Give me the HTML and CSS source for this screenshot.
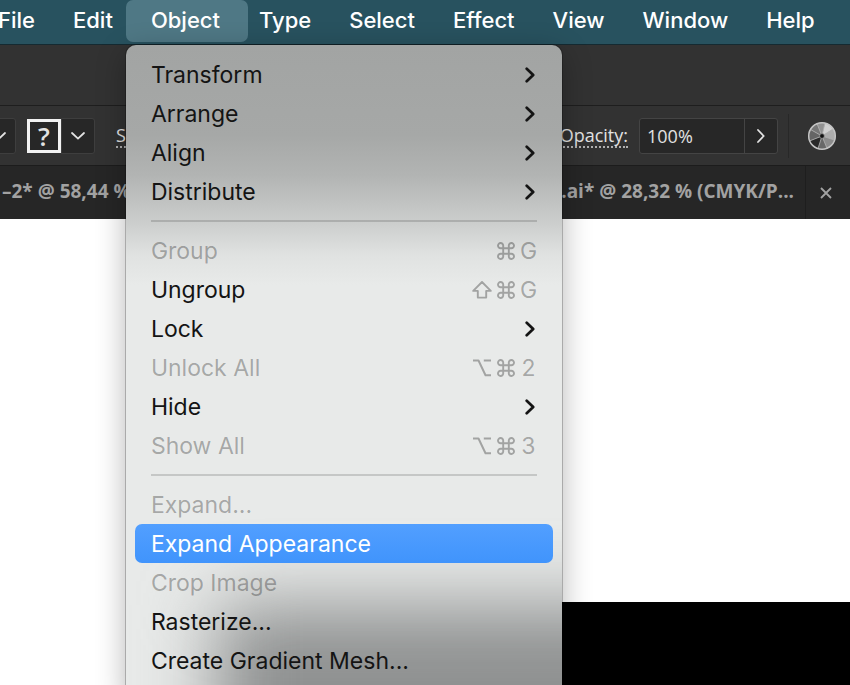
FILE: index.html
```html
<!DOCTYPE html>
<html lang="en">
<head>
    <meta charset="UTF-8">
    <meta name="viewport" content="width=device-width, initial-scale=1.0">
    <title>Object menu</title>
    <link rel="stylesheet" href="styles.css">
</head>
<body>
    <svg class="sprite" aria-hidden="true">
        <symbol id="chevron" viewBox="0 0 10 16">
            <path d="M1.7 1.7 8.2 8 1.7 14.3" fill="none" stroke="currentColor" stroke-width="2.7" stroke-linecap="round" stroke-linejoin="round"/>
        </symbol>
        <symbol id="command" viewBox="0 0 18 18">
            <path d="M6.2 6.2H3.7A2.6 2.6 0 1 1 6.2 3.6V14.4A2.6 2.6 0 1 1 3.7 11.8H14.3A2.6 2.6 0 1 1 11.8 14.4V3.6A2.6 2.6 0 1 1 14.3 6.2Z" fill="none" stroke="currentColor" stroke-width="1.9"/>
        </symbol>
        <symbol id="option" viewBox="0 0 19 18">
            <path d="M.5 1.5H6L13 16.2H18.5M11.3 1.5H18.5" fill="none" stroke="currentColor" stroke-width="2" stroke-linejoin="round"/>
        </symbol>
        <symbol id="shift" viewBox="0 0 20 18">
            <path d="M10 1 18.8 9.9H14.2V16.6H5.8V9.9H1.2Z" fill="none" stroke="currentColor" stroke-width="1.9" stroke-linejoin="round"/>
        </symbol>
        <symbol id="caret" viewBox="0 0 14 8">
            <path d="M1 1 7 6.6 13 1" fill="none" stroke="currentColor" stroke-width="1.8" stroke-linecap="round"/>
        </symbol>
    </svg>

    <div class="app">
        <nav class="menubar">
            <button class="menubar-item">File</button>
            <button class="menubar-item">Edit</button>
            <div class="menubar-open">
                <button class="menubar-item active" aria-expanded="true">Object</button>
                <div class="menu" role="menu">
                    <button class="menu-item" role="menuitem">Transform<svg class="arrow"><use href="#chevron"/></svg></button>
                    <button class="menu-item" role="menuitem">Arrange<svg class="arrow"><use href="#chevron"/></svg></button>
                    <button class="menu-item" role="menuitem">Align<svg class="arrow"><use href="#chevron"/></svg></button>
                    <button class="menu-item" role="menuitem">Distribute<svg class="arrow"><use href="#chevron"/></svg></button>
                    <hr class="menu-line">
                    <button class="menu-item" role="menuitem" disabled>Group
                        <span class="keys"><svg class="key-cmd"><use href="#command"/></svg><span class="key">G</span></span>
                    </button>
                    <button class="menu-item" role="menuitem">Ungroup
                        <span class="keys"><svg class="key-mod"><use href="#shift"/></svg><svg class="key-cmd"><use href="#command"/></svg><span class="key">G</span></span>
                    </button>
                    <button class="menu-item" role="menuitem">Lock<svg class="arrow"><use href="#chevron"/></svg></button>
                    <button class="menu-item" role="menuitem" disabled>Unlock All
                        <span class="keys"><svg class="key-mod"><use href="#option"/></svg><svg class="key-cmd"><use href="#command"/></svg><span class="key">2</span></span>
                    </button>
                    <button class="menu-item" role="menuitem">Hide<svg class="arrow"><use href="#chevron"/></svg></button>
                    <button class="menu-item" role="menuitem" disabled>Show All
                        <span class="keys"><svg class="key-mod"><use href="#option"/></svg><svg class="key-cmd"><use href="#command"/></svg><span class="key">3</span></span>
                    </button>
                    <hr class="menu-line">
                    <button class="menu-item" role="menuitem" disabled>Expand...</button>
                    <button class="menu-item selected" role="menuitem">Expand Appearance</button>
                    <button class="menu-item" role="menuitem" disabled>Crop Image</button>
                    <button class="menu-item" role="menuitem">Rasterize...</button>
                    <button class="menu-item" role="menuitem">Create Gradient Mesh...</button>
                </div>
            </div>
            <button class="menubar-item">Type</button>
            <button class="menubar-item">Select</button>
            <button class="menubar-item">Effect</button>
            <button class="menubar-item">View</button>
            <button class="menubar-item">Window</button>
            <button class="menubar-item">Help</button>
        </nav>

        <div class="titlebar"></div>

        <div class="controls">
            <button class="drop drop-fill" aria-label="Fill"><svg class="caret"><use href="#caret"/></svg></button>
            <div class="swatch-group">
                <button class="swatch">?</button>
                <button class="drop" aria-label="Stroke color"><svg class="caret"><use href="#caret"/></svg></button>
            </div>
            <a class="control-label" href="#">S</a>
            <div class="opacity">
                <label class="control-label" for="opacity">Opacity:</label>
                <div class="field">
                    <input class="field-input" id="opacity" type="text" value="100%">
                    <button class="field-button" aria-label="Opacity options">
                        <svg width="8" height="14" viewBox="0 0 8 14"><path d="M1 1 6.6 7 1 13" fill="none" stroke="currentColor" stroke-width="1.8" stroke-linecap="round"/></svg>
                    </button>
                </div>
            </div>
            <button class="recolor" aria-label="Recolor artwork">
                <svg width="30" height="30" viewBox="-15 -15 30 30">
                    <circle r="13.5" fill="#858585"/>
                    <path d="M0 0 3-13A13.3 13.3 0 0 1 11-7Z" fill="#d0d0d0"/>
                    <path d="M0 0 11-7A13.3 13.3 0 0 1 12.5 4Z" fill="#adadad"/>
                    <path d="M0 0 12.5 4A13.3 13.3 0 0 1 5 12.3Z" fill="#8c8c8c"/>
                    <path d="M0 0 5 12.3A13.3 13.3 0 0 1-4 12.6Z" fill="#686868"/>
                    <path d="M0 0-4 12.6A13.3 13.3 0 0 1-12.5 5Z" fill="#292929"/>
                    <path d="M0 0-12.5 5A13.3 13.3 0 0 1-11.5-6.5Z" fill="#656565"/>
                    <path d="M0 0-11.5-6.5A13.3 13.3 0 0 1-5-12.3Z" fill="#777"/>
                    <path d="M0 0-5-12.3A13.3 13.3 0 0 1 3-13Z" fill="#929292"/>
                    <path d="M0 0 3-13M0 0 11-7M0 0 12.5 4M0 0 5 12.3M0 0-4 12.6M0 0-12.5 5M0 0-11.5-6.5M0 0-5-12.3" stroke="#b5b5b5" stroke-width=".8"/>
                    <circle r="13.3" fill="none" stroke="#c4c4c4" stroke-width="1.5"/>
                    <circle r="2.4" fill="#111" stroke="#999" stroke-width=".8"/>
                </svg>
            </button>
        </div>

        <div class="tabs">
            <span class="tab">–2* @ 58,44 %</span>
            <span class="tab tab-last">e.ai* @ 28,32 % (CMYK/P...</span>
            <button class="tab-close" aria-label="Close">
                <svg width="12" height="12" viewBox="0 0 12 12"><path d="M1 1 11 11M11 1 1 11" stroke="currentColor" stroke-width="1.8"/></svg>
            </button>
        </div>

        <main class="canvas">
            <div class="artwork"></div>
        </main>
    </div>
</body>
</html>
```
FILE: styles.css
```css
* {
    box-sizing: border-box;
}
body {
    margin: 0;
    background-color: #fff;
    font-family: Inter, sans-serif;
}
button {
    margin: 0;
    padding: 0;
    border: none;
    background: none;
    color: inherit;
    font: inherit;
}
.sprite {
    display: none;
}
.app {
    display: flex;
    flex-direction: column;
    height: 100vh;
    overflow: hidden;
}

/* menu bar */
.menubar {
    display: flex;
    gap: 38px;
    flex-shrink: 0;
    height: 45px;
    margin-left: -2px;
    background-color: #28525f;
    border-bottom: 1px solid #152a31;
    color: #fff;
    font-size: 22px;
    font-weight: 500;
}
.menubar-item {
    height: 42px;
    padding-bottom: 2px;
}
.menubar-open {
    position: relative;
    margin: 0 -27px 0 -25px;
}
.menubar-item.active {
    padding: 0 28px 2px 25px;
    background-color: #4f7885;
    border-radius: 7px;
}

/* drop-down menu */
.menu {
    position: absolute;
    top: 45px;
    left: 0;
    z-index: 10;
    width: 436px;
    padding: 10px 9px 20px;
    overflow: hidden;
    background: linear-gradient(#a2a4a3, #a6a8a7 90px, #b2b4b3 130px, #cdcfce 180px, #e0e2e1 210px, #e8eae9 240px);
    border-radius: 10px;
    box-shadow: 0 0 0 1px rgba(0, 0, 0, 0.22), 0 8px 30px rgba(0, 0, 0, 0.3);
    color: #141414;
    font-size: 23px;
    font-weight: 400;
}
/* dark artwork showing through the bottom of the menu */
.menu::before {
    content: "";
    position: absolute;
    top: 560px;
    right: -120px;
    bottom: -120px;
    left: 90px;
    z-index: -1;
    background-color: #8f9191;
    filter: blur(36px);
}
.menu-item {
    display: flex;
    align-items: center;
    justify-content: space-between;
    width: 100%;
    height: 39px;
    padding: 0 16px;
    border-radius: 7px;
    text-align: left;
}
.menu-item:disabled {
    color: rgba(0, 0, 0, 0.3);
}
.menu-item.selected {
    background: linear-gradient(#529fff, #4094fc);
    color: #fff;
}
.menu-line {
    height: 2px;
    margin: 9px 16px;
    border: none;
    background-color: rgba(0, 0, 0, 0.15);
}
.arrow {
    width: 10px;
    height: 16px;
    margin-right: 2px;
}
.keys {
    display: flex;
    align-items: center;
    gap: 5px;
    color: rgba(0, 0, 0, 0.3);
}
.key {
    width: 17px;
    text-align: center;
}
.key-cmd {
    width: 18px;
    height: 18px;
}
.key-mod {
    width: 20px;
    height: 18px;
}

/* application bars */
.titlebar {
    flex-shrink: 0;
    height: 61px;
    background-color: #323232;
    border-bottom: 1px solid #1e1e1e;
}
.controls {
    display: flex;
    align-items: center;
    flex-shrink: 0;
    height: 60px;
    padding-right: 13px;
    background-color: #323232;
    border-bottom: 1px solid #1c1c1c;
    color: #e2e2e2;
    font-family: "Open Sans", sans-serif;
    font-size: 18px;
}
.drop {
    display: flex;
    align-items: center;
    justify-content: center;
    width: 34px;
    height: 36px;
    background-color: #272727;
    border: 1px solid #3e3e3e;
    border-radius: 0 3px 3px 0;
}
.drop-fill {
    margin-left: -18px;
}
.caret {
    width: 14px;
    height: 8px;
}
.swatch-group {
    display: flex;
    align-items: center;
    margin: 0 21px 0 11px;
}
.swatch {
    width: 34px;
    height: 34px;
    background-color: #272727;
    border: 3px solid #f2f2f2;
    font-size: 26px;
    font-weight: 600;
    line-height: 28px;
}
.control-label {
    border-bottom: 2px dotted #b0b0b0;
    color: inherit;
    line-height: 22px;
    text-decoration: none;
}
.opacity {
    display: flex;
    align-items: center;
    gap: 11px;
    margin-left: auto;
}
.field {
    display: flex;
    width: 139px;
    height: 36px;
    background-color: #272727;
    border: 1px solid #444;
    border-radius: 3px;
}
.field-input {
    flex: 1;
    min-width: 0;
    padding: 0 7px;
    border: none;
    background: none;
    color: inherit;
    font: inherit;
}
.field-button {
    display: flex;
    align-items: center;
    justify-content: center;
    width: 33px;
    border-left: 1px solid #444;
}
.recolor {
    display: flex;
    align-items: center;
    height: 44px;
    margin-left: 10px;
    padding-left: 18px;
    border-left: 1px solid #282828;
}

/* document tabs */
.tabs {
    display: flex;
    align-items: center;
    flex-shrink: 0;
    height: 53px;
    background-color: #262626;
    color: #a2a2a2;
    font-family: "Open Sans", sans-serif;
    font-size: 19px;
    font-weight: 700;
    white-space: nowrap;
}
.tab {
    padding: 0 0 3px 2px;
}
.tab-last {
    margin-left: auto;
    padding-right: 11px;
}
.tab-close {
    display: flex;
    align-items: center;
    justify-content: center;
    width: 45px;
    height: 100%;
    padding-right: 4px;
    border-left: 1px solid #1e1e1e;
}

/* canvas */
.canvas {
    flex: 1;
    padding-top: 383px;
    background-color: #fff;
}
.artwork {
    height: 300px;
    margin-left: 210px;
    background-color: #000;
}
```
